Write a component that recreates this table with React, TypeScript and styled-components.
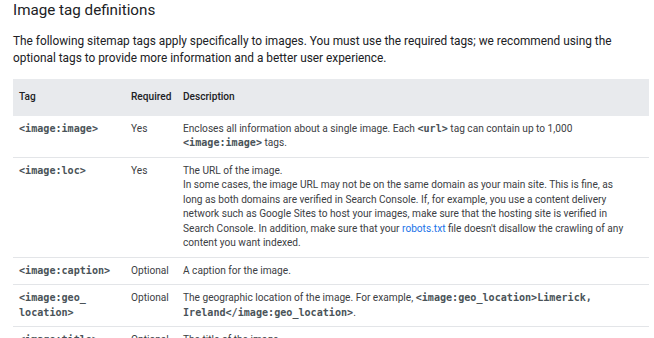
import React from "react";
import styled, { createGlobalStyle } from "styled-components";

const Global = createGlobalStyle`
  html, body { margin: 0; padding: 0; background: #fff; }
  body { font-family: Roboto, "Noto Sans", Arial, sans-serif; color: #202124; overflow: hidden; }
`;

const Page = styled.div`
  padding: 0 5px 0 13px;
`;

const Title = styled.h2`
  margin: 0;
  font-size: 15.2px;
  line-height: 20px;
  font-weight: 400;
  color: #202124;
`;

const Intro = styled.p`
  margin: 13px 0 13px;
  font-size: 11.85px;
  line-height: 16.5px;
  color: #202124;
`;

const Table = styled.table`
  width: 636px;
  border-collapse: collapse;
  table-layout: fixed;
  font-size: 10.15px;
  line-height: 14.5px;
  color: #3c4043;
`;

const Th = styled.th`
  background: #e8eaed;
  text-align: left;
  font-weight: 500;
  color: #202124;
  padding: 11px 6px 11px 6px;
  vertical-align: top;
`;

const Td = styled.td<{ $last?: boolean }>`
  padding: 6px ${(p) => (p.$last ? "16px" : "6px")} 6px 6px;
  vertical-align: top;
  border-bottom: 1px solid #e3e5e8;
`;

const Code = styled.code`
  font-family: "DejaVu Sans Mono", "Liberation Mono", monospace;
  font-size: 10.1px;
  font-weight: 700;
  color: #4a5358;
`;

const Link = styled.a`
  color: #1a73e8;
  text-decoration: none;
`;

type Row = { tag: React.ReactNode; req: string; desc: React.ReactNode };

const rows: Row[] = [
  {
    tag: <Code>&lt;image:image&gt;</Code>,
    req: "Yes",
    desc: (
      <>
        Encloses all information about a single image. Each <Code>&lt;url&gt;</Code> tag can contain up to 1,000{" "}
        <Code>&lt;image:image&gt;</Code> tags.
      </>
    ),
  },
  {
    tag: <Code>&lt;image:loc&gt;</Code>,
    req: "Yes",
    desc: (
      <>
        The URL of the image.
        <br />
        In some cases, the image URL may not be on the same domain as your main site. This is fine, as long as both
        domains are verified in Search Console. If, for example, you use a content delivery network such as Google
        Sites to host your images, make sure that the hosting site is verified in Search Console. In addition, make
        sure that your <Link href="#">robots.txt</Link> file doesn't disallow the crawling of any content you want
        indexed.
      </>
    ),
  },
  {
    tag: <Code>&lt;image:caption&gt;</Code>,
    req: "Optional",
    desc: "A caption for the image.",
  },
  {
    tag: (
      <Code>
        &lt;image:geo_
        <br />
        location&gt;
      </Code>
    ),
    req: "Optional",
    desc: (
      <>
        The geographic location of the image. For example,{" "}
        <Code>&lt;image:geo_location&gt;Limerick, Ireland&lt;/image:geo_location&gt;</Code>.
      </>
    ),
  },
  {
    tag: <Code>&lt;image:title&gt;</Code>,
    req: "Optional",
    desc: "The title of the image.",
  },
];

export default function App() {
  return (
    <Page>
      <Global />
      <Title>Image tag definitions</Title>
      <Intro>
        The following sitemap tags apply specifically to images. You must use the required tags; we recommend using the
        optional tags to provide more information and a better user experience.
      </Intro>
      <Table>
        <colgroup>
          <col style={{ width: 112 }} />
          <col style={{ width: 52 }} />
          <col />
        </colgroup>
        <thead>
          <tr>
            <Th>Tag</Th>
            <Th>Required</Th>
            <Th>Description</Th>
          </tr>
        </thead>
        <tbody>
          {rows.map((r, i) => (
            <tr key={i}>
              <Td>{r.tag}</Td>
              <Td>{r.req}</Td>
              <Td $last>{r.desc}</Td>
            </tr>
          ))}
        </tbody>
      </Table>
    </Page>
  );
}
